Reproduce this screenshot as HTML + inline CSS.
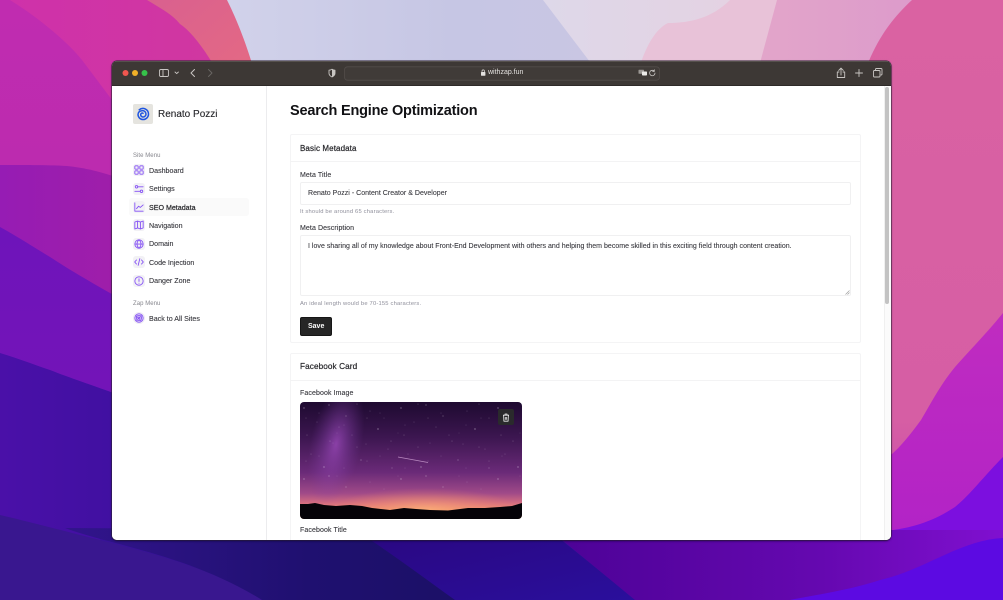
<!DOCTYPE html>
<html lang="en">
<head>
<meta charset="utf-8">
<title>Search Engine Optimization</title>
<style>
html,body{margin:0;padding:0;width:1003px;height:600px;overflow:hidden;background:#5a10b0}
*{box-sizing:border-box}
body{font-family:"Liberation Sans",sans-serif;position:relative}
.bg{position:absolute;left:0;top:0}
.win{position:absolute;left:112px;top:61px;width:779px;height:479px;border-radius:5px;background:#fff;overflow:hidden;box-shadow:0 0 0 .5px #2a2030,0 1px 2px rgba(10,0,40,.7)}
.bar{position:absolute;left:0;top:0;width:779px;height:25px;background:#3d3835;border-bottom:1px solid #2e2a28;border-top:1px solid #56514d}
.page{position:absolute;left:0;top:25px;width:779px;height:454px;background:#fff}
.t{position:absolute;white-space:nowrap;height:12px;line-height:12px}
.side{position:absolute;left:154px;top:0;width:1px;height:454px;background:#ececee}
.nav{font-size:7.1px;color:#35353b;left:37px;-webkit-text-stroke:.1px #35353b}
.sec{font-size:6px;color:#85858c;left:21px;letter-spacing:.05px}
.ic{position:absolute;left:21px;width:12px;height:12px;border-radius:3px;background:#f2f1f5}
.ic svg{position:absolute;left:1px;top:1px;width:10px;height:10px;fill:none;stroke:#8450f5;stroke-width:1.05;stroke-linecap:round;stroke-linejoin:round}
.card{position:absolute;left:178px;width:571px;background:#fff;border:1px solid #f4f4f5;border-radius:2px}
.hr{position:absolute;left:178px;width:571px;height:1px;background:#f3f3f4}
.h{font-size:8px;color:#26262a;left:188px;-webkit-text-stroke:.2px #26262a;letter-spacing:.1px}
.l{font-size:7px;color:#35353b;left:188px;letter-spacing:.1px;-webkit-text-stroke:.1px #35353b}
.inp{position:absolute;left:188px;width:551px;border:1px solid #f0f0f1;border-radius:2px;background:#fff}
.v{font-size:7px;color:#35353b;left:196px;letter-spacing:.02px;-webkit-text-stroke:.08px #35353b}
.help{font-size:5.8px;color:#8f8f9b;left:188px;letter-spacing:.19px}
</style>
</head>
<body>
<svg class="bg" width="1003" height="600" viewBox="0 0 1003 600" xmlns="http://www.w3.org/2000/svg">
<defs>
<linearGradient id="a" x1="0" y1="0" x2="0" y2="1"><stop offset="0" stop-color="#c02cb0"/><stop offset="1" stop-color="#b228ac"/></linearGradient>
<linearGradient id="c" x1="0" y1="0" x2="1" y2="0"><stop offset="0" stop-color="#cf31aa"/><stop offset="1" stop-color="#d0389f"/></linearGradient>
<linearGradient id="cor" x1="0" y1="0" x2="1" y2="1"><stop offset="0" stop-color="#d9608f"/><stop offset="1" stop-color="#e86c80"/></linearGradient>
<linearGradient id="lav" x1="0" y1="0" x2="1" y2="0"><stop offset="0" stop-color="#d1d2ea"/><stop offset=".35" stop-color="#c6c6e4"/><stop offset=".75" stop-color="#ccc6e2"/><stop offset="1" stop-color="#d8c8de"/></linearGradient>
<linearGradient id="pale" x1="0" y1="0" x2="1" y2="0"><stop offset="0" stop-color="#ded8e9"/><stop offset="1" stop-color="#e6d0e0"/></linearGradient>
<linearGradient id="rp" x1="0" y1="0" x2="1" y2="0"><stop offset="0" stop-color="#e3a6ca"/><stop offset="1" stop-color="#dc9acb"/></linearGradient>
<linearGradient id="p2" x1="0" y1="0" x2="1" y2="0"><stop offset="0" stop-color="#961cb4"/><stop offset="1" stop-color="#a01ea8"/></linearGradient>
<linearGradient id="p3" x1="0" y1="0" x2="0" y2="1"><stop offset="0" stop-color="#6e14ba"/><stop offset="1" stop-color="#7a14b6"/></linearGradient>
<linearGradient id="p4" x1="0" y1="0" x2="1" y2="0"><stop offset="0" stop-color="#4a10a8"/><stop offset="1" stop-color="#3f10a0"/></linearGradient>
<linearGradient id="nv" x1="0" y1="0" x2="1" y2="0"><stop offset="0" stop-color="#32148c"/><stop offset=".6" stop-color="#1f1070"/><stop offset="1" stop-color="#1b1066"/></linearGradient>
<linearGradient id="m2" x1="0" y1="0" x2="1" y2="1"><stop offset="0" stop-color="#2a0780"/><stop offset="1" stop-color="#2a0f9c"/></linearGradient>
<linearGradient id="m3" x1="0" y1="0" x2="1" y2="0"><stop offset="0" stop-color="#4c0296"/><stop offset=".6" stop-color="#6508b0"/><stop offset="1" stop-color="#8010d0"/></linearGradient>
<linearGradient id="rb" x1="0" y1="0" x2="0" y2="1"><stop offset="0" stop-color="#da62a2"/><stop offset=".7" stop-color="#d65ea4"/><stop offset=".9" stop-color="#c448ac"/></linearGradient>
<linearGradient id="pu" x1="0" y1="0" x2="0" y2="1"><stop offset="0" stop-color="#c02cc0"/><stop offset="1" stop-color="#ae20c8"/></linearGradient>
<linearGradient id="st" x1="0" y1="0" x2="0" y2="1"><stop offset="0" stop-color="#1e0a30"/><stop offset=".3" stop-color="#3c1650"/><stop offset=".6" stop-color="#6a2a78"/><stop offset=".78" stop-color="#a04a88"/><stop offset=".87" stop-color="#d87080"/><stop offset=".93" stop-color="#f09070"/><stop offset="1" stop-color="#f09a68"/></linearGradient>
<radialGradient id="mw" cx=".5" cy=".5" r=".5"><stop offset="0" stop-color="#a850c8" stop-opacity=".7"/><stop offset="1" stop-color="#7a3aa0" stop-opacity="0"/></radialGradient>
<radialGradient id="gl" cx=".5" cy=".5" r=".5"><stop offset="0" stop-color="#ffb87a" stop-opacity=".7"/><stop offset="1" stop-color="#ff9060" stop-opacity="0"/></radialGradient>
</defs>
<rect width="1003" height="600" fill="url(#a)"/>
<!-- top left -->
<path d="M10 0C45 22 70 45 82 60L112 100L240 100V0Z" fill="url(#c)"/>
<path d="M147 0C160 8 172 14 180 24C198 36 218 70 238 110L270 110L240 0Z" fill="url(#cor)"/>
<!-- centre -->
<path d="M227 0C236 18 250 50 262 100L880 100L880 0Z" fill="url(#lav)"/>
<path d="M543 0L590 62L620 100L800 100L800 0Z" fill="url(#pale)"/>
<path d="M630 100C640 60 650 32 668 23C690 23 712 18 730 0L780 0L752 100Z" fill="#e8c2d8"/>
<path d="M777 0H925L860 100H750Z" fill="url(#rp)"/>
<path d="M912 0C885 25 870 50 855 100L855 600H1003V0Z" fill="url(#rb)"/>
<!-- right lower -->
<path d="M1003 313C985 335 970 350 955 367C940 385 930 405 921 420C910 435 900 448 885 460L880 600H1003Z" fill="url(#pu)"/>
<path d="M1003 457C985 475 970 495 955 507C935 520 915 528 885 531L780 600H1003Z" fill="#7c0fdf"/>
<!-- left bands -->
<path d="M0 165C30 165 50 165 67 166C85 168 100 171 130 182L130 600H0Z" fill="url(#p2)"/>
<path d="M0 227C20 238 35 248 50 257C70 270 95 285 130 304L130 600H0Z" fill="url(#p3)"/>
<path d="M0 353C20 359 35 365 50 370C70 378 95 386 130 399L130 600H0Z" fill="url(#p4)"/>
<!-- bottom -->
<rect x="100" y="530" width="800" height="70" fill="#38129a"/>
<path d="M0 515C30 522 60 530 100 540C160 555 215 570 262 600H0Z" fill="#39178f"/>
<path d="M65 528C110 545 190 555 262 600H470L355 530Z" fill="url(#nv)"/>
<path d="M355 530C390 552 420 575 455 600H635C600 570 570 548 550 530Z" fill="url(#m2)"/>
<path d="M550 530L635 600H1003V530Z" fill="url(#m3)"/>
<path d="M1003 538C960 540 925 570 880 580C850 590 815 595 790 600H1003Z" fill="#5c0ae2"/>
</svg>

<div class="win">
<div class="bar">
<svg width="779" height="24" viewBox="0 0 779 24" style="position:absolute;left:0;top:0" xmlns="http://www.w3.org/2000/svg">
<rect x="232.5" y="4.8" width="315" height="13.4" rx="3" fill="#403b38" stroke="#524d4a" stroke-width=".8"/>
<circle cx="13.5" cy="11" r="3" fill="#f0564f"/><circle cx="23" cy="11" r="3" fill="#f0b028"/><circle cx="32.5" cy="11" r="3" fill="#36c24a"/>
<g fill="none" stroke="#c9c6c3" stroke-width=".9" stroke-linecap="round" stroke-linejoin="round">
<rect x="47.5" y="7.5" width="9" height="7" rx="1.4"/><path d="M51 7.5v7"/><path d="M63 10l1.7 1.6 1.7-1.600"/>
<path d="M82.500 7.500l-3.500 3.500 3.500 3.500" stroke-width="1"/>
<path d="M96.500 7.500l3.500 3.500-3.500 3.500" stroke="#6a6663"/>
<path d="M220 7.200c-1 .8-2 1-3 1v3c0 2 1.500 3 3 3.800 1.500-.8 3-1.800 3-3.800v-3c-1 0-2-.2-3-1z"/>
<path d="M729 6.500v6.500M726.700 8.400l2.300-2.300 2.300 2.300M727 10h-1.700v5.500h7.400V10H731"/>
<path d="M747 7.500v7M743.500 11h7"/>
<rect x="761.500" y="8.500" width="6.500" height="6.500" rx="1"/><path d="M763.500 8.500V7.500a1 1 0 0 1 1-1h4.500a1 1 0 0 1 1 1V12a1 1 0 0 1-1 1"/>
<path d="M542.300 9.200a2.700 2.700 0 1 0 .7 1.800M542.300 7.800v1.700h-1.700" stroke-width=".8"/>
</g>
<path d="M220 7.200c1 .8 2 1 3 1v3c0 2-1.500 3-3 3.800z" fill="#c9c6c3"/>
<rect x="369" y="10" width="4.400" height="3.700" rx=".6" fill="#e4e2e0"/>
<path d="M370 10.200V9.100a1.200 1.200 0 0 1 2.400 0v1.100" fill="none" stroke="#e4e2e0" stroke-width=".7"/>
<rect x="526.500" y="7.800" width="5.500" height="4" rx=".7" fill="#9b9794"/>
<rect x="530" y="9.500" width="5" height="4" rx=".7" fill="#ecebe9"/>
</svg>
<div class="t" style="left:376px;top:5px;font-size:7px;color:#e2e0de">withzap.fun</div>
</div>

<div class="page">
<div class="side"></div>
<div style="position:absolute;left:771.500px;top:0;width:7.500px;height:454px;background:#fbfbfb;border-left:1px solid #f0f0f0"></div>
<div style="position:absolute;left:773px;top:1px;width:4px;height:217px;background:#c3c3c3;border-radius:2px"></div>

<!-- logo -->
<div style="position:absolute;left:21px;top:18px;width:20px;height:20px;background:#e5e4df;border-radius:2px"></div>
<svg style="position:absolute;left:24px;top:21px" width="14" height="14" viewBox="0 0 14 14" fill="none" stroke="#1f55e0" stroke-width="1.500" stroke-linecap="round"><path d="M3.200 2.800A5.600 5.600 0 0 1 12.500 7a5.400 5.400 0 0 1-5.500 5.500A5 5 0 0 1 2 7.500 3.800 3.800 0 0 1 5.800 3.700 3.500 3.500 0 0 1 10 7a3 3 0 0 1-3 3A2.300 2.300 0 0 1 4.700 7.500 1.500 1.500 0 0 1 7 6.300"/></svg>
<div class="t" style="left:46px;top:22.500px;font-size:10px;color:#26262a;-webkit-text-stroke:.12px #26262a">Renato Pozzi</div>

<div class="t sec" style="top:63.500px">Site Menu</div>
<div style="position:absolute;left:17px;top:112px;width:120px;height:18px;background:#fafafa;border-radius:3px"></div>

<div class="ic" style="top:78px"><svg viewBox="0 0 12 12"><rect x="1" y="1" width="4" height="4" rx=".8"/><rect x="7" y="1" width="4" height="4" rx=".8"/><rect x="1" y="7" width="4" height="4" rx=".8"/><rect x="7" y="7" width="4" height="4" rx=".8"/></svg></div>
<div class="t nav" style="top:78.500px">Dashboard</div>
<div class="ic" style="top:96.500px"><svg viewBox="0 0 12 12"><circle cx="3" cy="3.300" r="1.500"/><path d="M4.500 3.300H11M1 8.700h6.500"/><circle cx="9" cy="8.700" r="1.500"/></svg></div>
<div class="t nav" style="top:97px">Settings</div>
<div class="ic" style="top:115px"><svg viewBox="0 0 12 12"><path d="M1 1v10h10M3 8l2.500-3 2 1.500L11 3.500"/></svg></div>
<div class="t nav" style="top:115.500px;color:#26262a;-webkit-text-stroke:.2px #26262a">SEO Metadata</div>
<div class="ic" style="top:133px"><svg viewBox="0 0 12 12"><path d="M1 2.500l3.300-1.300 3.400 1.300L11 1.200v8.300l-3.300 1.300-3.400-1.300L1 10.800zM4.300 1.200v8.300M7.700 2.500v8.300"/></svg></div>
<div class="t nav" style="top:133.500px">Navigation</div>
<div class="ic" style="top:151.500px"><svg viewBox="0 0 12 12"><circle cx="6" cy="6" r="5"/><path d="M1 6h10M6 1c-3.200 3-3.200 7 0 10M6 1c3.200 3 3.200 7 0 10"/></svg></div>
<div class="t nav" style="top:152px">Domain</div>
<div class="ic" style="top:170px"><svg viewBox="0 0 12 12"><path d="M3 3.500L.8 6 3 8.500M9 3.500L11.200 6 9 8.500M7 2L5 10"/></svg></div>
<div class="t nav" style="top:170.500px">Code Injection</div>
<div class="ic" style="top:188.500px"><svg viewBox="0 0 12 12"><circle cx="6" cy="6" r="5"/><path d="M6 3.300v3.200M6 8.600v.1"/></svg></div>
<div class="t nav" style="top:189px">Danger Zone</div>

<div class="t sec" style="top:211.500px">Zap Menu</div>
<div class="ic" style="top:226px;border-radius:6px;background:#efedf3"><svg viewBox="0 0 12 12"><circle cx="6" cy="6" r="5"/><circle cx="6" cy="6" r="3.200"/><circle cx="6" cy="6" r="1.300"/><path d="M2 3l7 7M9.500 2.500l-7 7" stroke-width=".7"/></svg></div>
<div class="t nav" style="top:226.500px">Back to All Sites</div>

<!-- main -->
<div class="t" style="left:178px;top:15.500px;height:18px;line-height:18px;font-size:14.500px;font-weight:700;color:#111114;letter-spacing:-.2px">Search Engine Optimization</div>

<div class="card" style="top:48px;height:209px"></div>
<div class="hr" style="top:75px"></div>
<div class="t h" style="top:56.500px">Basic Metadata</div>
<div class="t l" style="top:83.500px">Meta Title</div>
<div class="inp" style="top:96px;height:23px"></div>
<div class="t v" style="top:102px">Renato Pozzi - Content Creator &amp; Developer</div>
<div class="t help" style="top:120px">It should be around 65 characters.</div>
<div class="t l" style="top:136.500px">Meta Description</div>
<div class="inp" style="top:149px;height:61px"></div>
<div class="t v" style="top:155px">I love sharing all of my knowledge about Front-End Development with others and helping them become skilled in this exciting field through content creation.</div>
<svg style="position:absolute;left:733px;top:204px" width="5" height="5" viewBox="0 0 5 5" fill="none" stroke="#9a9a9a" stroke-width=".6"><path d="M.5 4.500L4.500 .5M2.500 4.500l2-2"/></svg>
<div class="t help" style="top:211.500px">An ideal length would be 70-155 characters.</div>
<div style="position:absolute;left:188px;top:230.500px;width:32px;height:19px;background:#262626;border:1px solid #161616;border-radius:2px"></div>
<div class="t" style="left:196px;top:234px;font-size:7px;font-weight:700;color:#fff;line-height:13px">Save</div>

<div class="card" style="top:266.500px;height:200px;border-bottom:none"></div>
<div class="hr" style="top:294px"></div>
<div class="t h" style="top:275px;font-size:8.200px">Facebook Card</div>
<div class="t l" style="top:302px">Facebook Image</div>

<svg style="position:absolute;left:188px;top:315.500px" width="222" height="117" viewBox="0 0 222 117" xmlns="http://www.w3.org/2000/svg">
<defs>
<clipPath id="r"><rect width="222" height="117" rx="4"/></clipPath>
<pattern id="sa" width="97" height="71" patternUnits="userSpaceOnUse">
<circle cx="4" cy="6" r=".45" fill="#e8dcf0"/><circle cx="17" cy="20" r=".3" fill="#cdbce0"/><circle cx="29" cy="3" r=".4" fill="#fff"/><circle cx="33" cy="41" r=".3" fill="#bda8d8"/><circle cx="11" cy="52" r=".3" fill="#d8c8e8"/><circle cx="24" cy="65" r=".45" fill="#efe6f4"/><circle cx="46" cy="14" r=".35" fill="#fff"/><circle cx="52" cy="33" r=".3" fill="#d8c8e8"/><circle cx="61" cy="58" r=".4" fill="#efe6f4"/><circle cx="70" cy="9" r=".3" fill="#cdbce0"/><circle cx="78" cy="27" r=".45" fill="#fff"/><circle cx="88" cy="47" r=".3" fill="#d8c8e8"/><circle cx="92" cy="66" r=".35" fill="#e8dcf0"/><circle cx="39" cy="25" r=".25" fill="#fff"/><circle cx="66" cy="42" r=".25" fill="#e8dcf0"/><circle cx="7" cy="33" r=".3" fill="#fff"/><circle cx="84" cy="16" r=".25" fill="#cdbce0"/>
</pattern>
<pattern id="sb" width="61" height="43" patternUnits="userSpaceOnUse" patternTransform="translate(13 7)">
<circle cx="6" cy="4" r=".25" fill="#cdbce0"/><circle cx="17" cy="32" r=".3" fill="#fff"/><circle cx="31" cy="16" r=".25" fill="#d8c8e8"/><circle cx="44" cy="38" r=".3" fill="#efe6f4"/><circle cx="54" cy="9" r=".25" fill="#fff"/><circle cx="24" cy="24" r=".2" fill="#fff"/>
</pattern>
</defs>
<g clip-path="url(#r)">
<rect width="222" height="117" fill="url(#st)"/>
<ellipse cx="36" cy="42" rx="26" ry="62" transform="rotate(12 36 42)" fill="url(#mw)"/>
<ellipse cx="125" cy="108" rx="95" ry="22" fill="url(#gl)"/>
<rect width="222" height="88" fill="url(#sa)"/>
<rect width="222" height="80" fill="url(#sb)"/>
<path d="M98 55L128 60.500" stroke="#b98ac0" stroke-width=".7"/>
<path d="M0 102L8 102L15 101L24 103L36 104L50 103L62 104L72 106L90 108L104 106L116 107L130 108L148 108.500L168 106L185 106L200 105L212 104L222 101V117H0Z" fill="#050308"/>
</g>
</svg>
<div style="position:absolute;left:386px;top:323px;width:16px;height:16px;background:#2a2a2c;border-radius:2px"></div>
<svg style="position:absolute;left:390px;top:326.500px" width="8" height="9" viewBox="0 0 8 9" fill="none" stroke="#eee" stroke-width=".8" stroke-linejoin="round"><path d="M1 2.200h6M3 2.200V1h2v1.200M1.600 2.200l.3 6h4.200l.3-6M3.300 4v2.800M4.700 4v2.800"/></svg>
<div class="t l" style="top:439px">Facebook Title</div>
</div>
</div>
</body>
</html>
